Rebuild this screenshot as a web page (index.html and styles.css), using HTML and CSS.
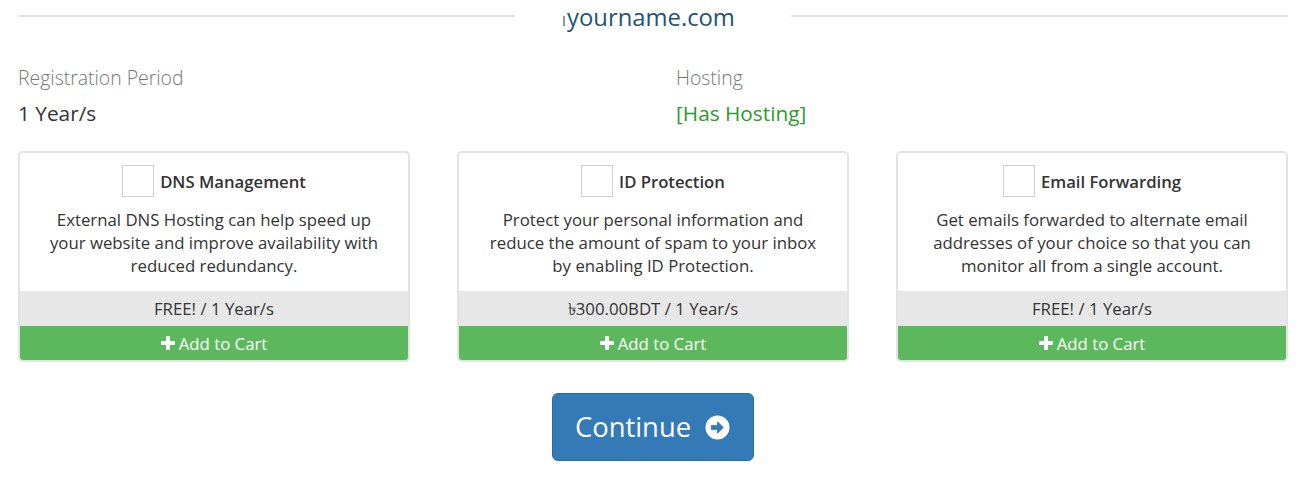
FILE: index.html
```html
<!DOCTYPE html>
<html>
<head>
<meta charset="utf-8">
<link rel="stylesheet" href="styles.css">
</head>
<body>
<div class="page">
  <div class="domain-head">
    <span class="line"></span>
    <span class="domain"><span class="clip"></span>yourname.com</span>
    <span class="line"></span>
  </div>
  <div class="info">
    <div class="info-col">
      <div class="label">Registration Period</div>
      <div class="value">1 Year/s</div>
    </div>
    <div class="info-col">
      <div class="label">Hosting</div>
      <div class="value green">[Has Hosting]</div>
    </div>
  </div>
  <div class="addons">
    <div class="card">
      <div class="card-body">
        <div class="title"><span class="check"></span><span>DNS Management</span></div>
        <p class="desc">External DNS Hosting can help speed up your website and improve availability with reduced redundancy.</p>
      </div>
      <div class="price">FREE! / 1 Year/s</div>
      <div class="add"><span class="plus"></span>Add to Cart</div>
    </div>
    <div class="card">
      <div class="card-body">
        <div class="title"><span class="check"></span><span>ID Protection</span></div>
        <p class="desc">Protect your personal information and reduce the amount of spam to your inbox by enabling ID Protection.</p>
      </div>
      <div class="price">৳300.00BDT / 1 Year/s</div>
      <div class="add"><span class="plus"></span>Add to Cart</div>
    </div>
    <div class="card">
      <div class="card-body">
        <div class="title"><span class="check"></span><span>Email Forwarding</span></div>
        <p class="desc">Get emails forwarded to alternate email addresses of your choice so that you can monitor all from a single account.</p>
      </div>
      <div class="price">FREE! / 1 Year/s</div>
      <div class="add"><span class="plus"></span>Add to Cart</div>
    </div>
  </div>
  <div class="actions">
    <button class="continue">Continue
      <svg class="arrow" width="25" height="25" viewBox="0 0 24 24"><circle cx="12" cy="12" r="11.5" fill="#fff"/><path d="M6 10h6V6.5l5.5 5.5-5.5 5.5V14H6z" fill="#337ab7" stroke="#337ab7" stroke-width="0.8" stroke-linejoin="round"/></svg>
    </button>
  </div>
</div>
</body>
</html>
```
FILE: styles.css
```css
html, body {
  margin: 0;
  padding: 0;
  background: #fff;
}
body {
  font-family: "Open Sans", "Noto Sans", sans-serif;
  color: #333;
}
.page {
  width: 1270px;
  padding: 0 15px 0 18px;
}
.domain-head {
  display: flex;
  align-items: center;
  height: 34px;
}
.domain-head .line {
  flex: 1;
  height: 2px;
  background: #e2e2e2;
  margin-top: -3px;
}
.domain {
  width: 276px;
  text-align: center;
  font-size: 23.8px;
  color: #1e5479;
  line-height: 30px;
  padding-right: 8px;
  box-sizing: border-box;
}
.domain .clip {
  display: inline-block;
  width: 2px;
  height: 10px;
  background: #7f9fb5;
  vertical-align: 0;
  margin-right: 2px;
}
.info {
  display: grid;
  grid-template-columns: 658px 1fr;
  margin-top: 30px;
}
.label {
  font-size: 19.4px;
  font-weight: 300;
  color: #777;
  line-height: 28px;
}
.value {
  font-size: 20.8px;
  color: #333;
  line-height: 28px;
  margin-top: 7px;
}
.value.green {
  color: #2a9b2a;
}
.addons {
  display: grid;
  grid-template-columns: repeat(3, 392px);
  column-gap: 47px;
  margin-top: 24px;
}
.card {
  border: 2px solid #e3e3e3;
  border-radius: 5px;
  overflow: hidden;
  display: flex;
  flex-direction: column;
  height: 211px;
  box-sizing: border-box;
}
.card-body {
  flex: 1;
  padding: 12px 25px 0;
  text-align: center;
}
.title {
  display: flex;
  justify-content: center;
  align-items: center;
  gap: 6px;
  font-size: 16.7px;
  font-weight: 600;
  color: #333;
  height: 32px;
}
.check {
  width: 30px;
  height: 30px;
  border: 1px solid #d0d0d0;
  background: #fff;
  display: inline-block;
}
.desc {
  margin: 11px 0 0;
  font-size: 16.8px;
  line-height: 23px;
  color: #333;
}
.price {
  background: #e7e7e7;
  height: 35px;
  line-height: 35px;
  text-align: center;
  font-size: 16.8px;
  color: #333;
}
.add {
  background: #5cb85c;
  color: #fff;
  height: 34px;
  line-height: 35px;
  text-align: center;
  font-size: 16.8px;
  display: flex;
  justify-content: center;
  align-items: center;
  gap: 4px;
}
.plus {
  width: 14px;
  height: 14px;
  position: relative;
  display: inline-block;
  margin-top: -1px;
}
.plus::before, .plus::after {
  content: "";
  position: absolute;
  background: #fff;
  border-radius: 1px;
}
.plus::before {
  left: 5px; top: 0; width: 4px; height: 14px;
}
.plus::after {
  left: 0; top: 5px; width: 14px; height: 4px;
}
.actions {
  display: flex;
  justify-content: center;
  margin-top: 31px;
  padding-right: 1px;
}
.continue {
  width: 202px;
  height: 68px;
  background: #337ab7;
  border: 1px solid #2e6da4;
  border-radius: 6px;
  color: #fff;
  font-family: "Open Sans", "Noto Sans", sans-serif;
  font-size: 27.4px;
  display: flex;
  align-items: center;
  justify-content: center;
  gap: 14px;
  padding: 0 0 2px;
}
.arrow {
  margin-top: 2px;
}
```
